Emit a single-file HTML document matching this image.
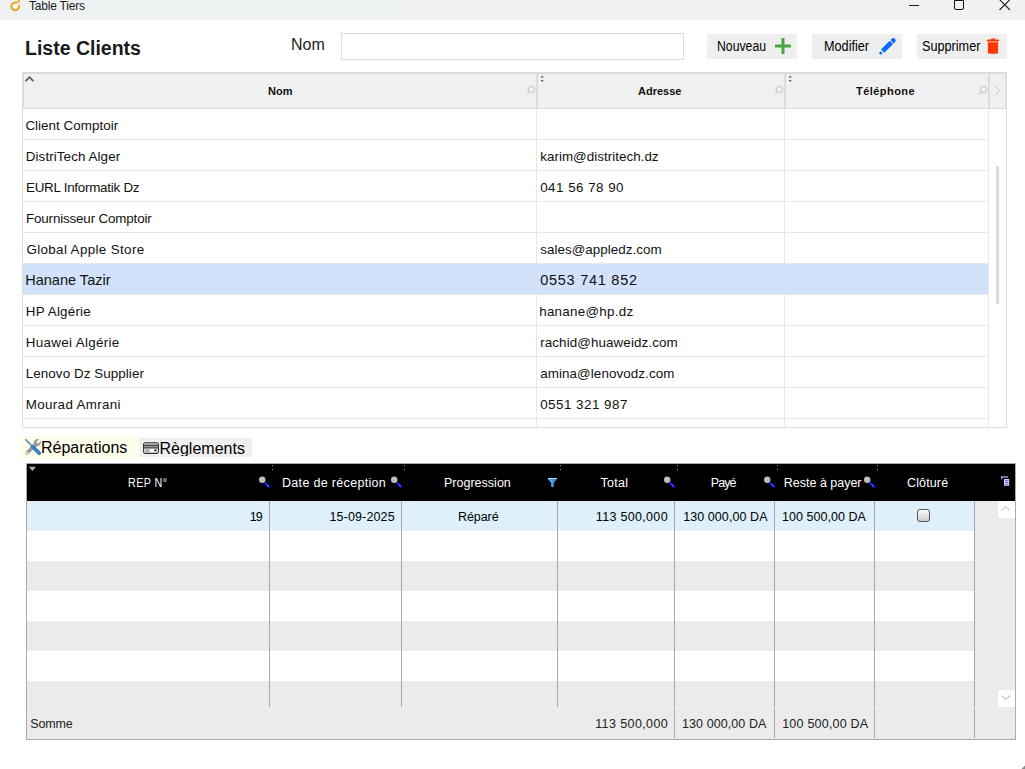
<!DOCTYPE html>
<html><head><meta charset="utf-8">
<style>
*{margin:0;padding:0;box-sizing:border-box}
html,body{width:1025px;height:769px;overflow:hidden;background:#fff;font-family:"Liberation Sans",sans-serif;color:#000;position:relative}
.a{position:absolute;white-space:nowrap}
#title{left:0;top:0;width:1025px;height:20px;background:linear-gradient(90deg,#eef2f3,#eff1f3 60%,#f1f1f4);border-bottom:0}
.btn{background:#efefef;height:25px;top:34px}
.btxt{font-size:14px;top:38px;color:#000;transform-origin:0 0}
.hdr{background:#f0f0f0}
.cell{font-size:13.4px;color:#111}
.hl{font-size:14.5px}
.rl{height:1px;background:#e8e8e8}
.bh{color:#fff;font-size:12.5px;top:476px}
.bt{font-size:12.5px;color:#000}
.vl{width:1px;background:#a9a9a9}
</style></head><body>
<!-- title bar -->
<div id="title" class="a"></div><div class="a" style="left:0;top:20px;width:1025px;height:1px;background:#f7f9f9"></div>
<svg class="a" style="left:5px;top:0px" width="20" height="14" viewBox="0 0 20 14">
  <path d="M12.2 3.0 A3.9 3.9 0 1 0 13.9 5.0" fill="none" stroke="#eaa20f" stroke-width="1.9"/>
  <path d="M7.9 5.4 L9.8 7.4 L13.2 3.7" fill="none" stroke="#fff" stroke-width="1.3"/>
  <path d="M13.6 -0.5 V2.6 M12.3 1.3 H14.9" stroke="#eaa20f" stroke-width="1.3"/>
</svg>
<div class="a" style="left:29px;top:-1px;font-size:12px;color:#1a1a1a;letter-spacing:-0.2px">Table Tiers</div>
<div class="a" style="left:909px;top:5px;width:10px;height:1px;background:#222"></div>
<div class="a" style="left:954px;top:0px;width:10px;height:10px;border:1px solid #111;border-radius:0 0 2px 2px"></div>
<svg class="a" style="left:999px;top:0px" width="12" height="11" viewBox="0 0 12 11"><path d="M0.5 -0.5 L11 10 M11 -0.5 L0.5 10" stroke="#222" stroke-width="1.1"/></svg>

<!-- header -->
<div class="a" style="left:25px;top:37px;font-size:19.5px;font-weight:bold;color:#1a1a1a">Liste Clients</div>
<div class="a" style="left:291px;top:36px;font-size:16px;color:#222">Nom</div>
<div class="a" style="left:341px;top:33px;width:343px;height:27px;border:1px solid #dcdcdc;background:#fff"></div>

<div class="a btn" style="left:707px;width:90px"></div>
<div class="a btxt" style="left:717px;transform:scaleX(0.875)">Nouveau</div>
<svg class="a" style="left:775px;top:38px" width="16" height="16"><rect x="6.5" y="0" width="3" height="16" fill="#4aa541"/><rect x="0" y="6.5" width="16" height="3" fill="#4aa541"/></svg>

<div class="a btn" style="left:812px;width:90px"></div>
<div class="a btxt" style="left:824px;transform:scaleX(0.905)">Modifier</div>
<svg class="a" style="left:874px;top:34px" width="28" height="24" viewBox="0 0 28 24">
  <g transform="translate(5.6 20.2) rotate(-45)" fill="#0a6cff">
    <rect x="0.3" y="-1.3" width="2.6" height="2.6" rx="0.5"/>
    <rect x="4.3" y="-2.4" width="12.4" height="4.8" rx="0.7"/>
    <path d="M17.6 -2.4 H19.4 Q21.7 -2.4 21.7 0 Q21.7 2.4 19.4 2.4 H17.6 Z"/>
  </g>
</svg>

<div class="a btn" style="left:917px;width:90px"></div>
<div class="a btxt" style="left:922px;transform:scaleX(0.905)">Supprimer</div>
<svg class="a" style="left:986px;top:38px" width="14" height="16" viewBox="0 0 14 16">
  <path d="M4.3 1.8 Q4.6 0.2 7 0.2 Q9.4 0.2 9.7 1.8 Z" fill="#ff3300"/>
  <rect x="0.8" y="1.6" width="12.4" height="1.8" rx="0.9" fill="#ff3300"/>
  <path d="M1.9 4.2 H12.1 V14.2 Q12.1 15.8 10.5 15.8 H3.5 Q1.9 15.8 1.9 14.2 Z" fill="#ff3700"/>
</svg>

<!-- top grid -->
<div class="a" style="left:22px;top:72px;width:985px;height:356px;border:1px solid #dadce0;background:#fff"></div>
<div class="a hdr" style="left:23px;top:73px;width:983px;height:36px;border:1px solid #dadce0"></div>
<div class="a" style="left:536px;top:74px;width:2px;height:34px;background:#dadce0"></div>
<div class="a" style="left:784px;top:74px;width:2px;height:34px;background:#dadce0"></div>
<div class="a" style="left:988px;top:74px;width:2px;height:34px;background:#dadce0"></div>
<!-- column lines body -->
<div class="a" style="left:536px;top:109px;width:1px;height:317px;background:#e8e8e8"></div>
<div class="a" style="left:784px;top:109px;width:1px;height:317px;background:#e8e8e8"></div>
<div class="a" style="left:988px;top:109px;width:1px;height:317px;background:#e8e8e8"></div>

<!-- highlighted row -->
<div class="a" style="left:23px;top:264px;width:965px;height:30px;background:#d2e2fb"></div>

<!-- row lines -->
<div class="a rl" style="left:23px;top:139px;width:965px"></div>
<div class="a rl" style="left:23px;top:170px;width:965px"></div>
<div class="a rl" style="left:23px;top:201px;width:965px"></div>
<div class="a rl" style="left:23px;top:232px;width:965px"></div>
<div class="a rl" style="left:23px;top:263px;width:965px"></div>
<div class="a rl" style="left:23px;top:294px;width:965px"></div>
<div class="a rl" style="left:23px;top:325px;width:965px"></div>
<div class="a rl" style="left:23px;top:356px;width:965px"></div>
<div class="a rl" style="left:23px;top:387px;width:965px"></div>
<div class="a rl" style="left:23px;top:418px;width:965px"></div>

<!-- header text -->
<div class="a" style="left:268px;top:85px;font-size:11px;font-weight:bold;color:#111">Nom</div>
<div class="a" style="left:638px;top:85px;font-size:11px;font-weight:bold;color:#111">Adresse</div>
<div class="a" style="left:856px;top:85px;font-size:11px;font-weight:bold;color:#111;letter-spacing:0.45px">Téléphone</div>

<!-- rows text -->
<div id="c0" class="a cell" style="left:25.4px;top:118px;letter-spacing:0.035px">Client Comptoir</div>
<div id="c1" class="a cell" style="left:25.8px;top:149px;letter-spacing:0.087px">DistriTech Alger</div>
<div id="c2" class="a cell" style="left:540.2px;top:149px;letter-spacing:0.034px">karim@distritech.dz</div>
<div id="c3" class="a cell" style="left:26px;top:180px;letter-spacing:-0.253px">EURL Informatik Dz</div>
<div id="c4" class="a cell" style="left:540.2px;top:180px;letter-spacing:0.472px">041 56 78 90</div>
<div id="c5" class="a cell" style="left:26px;top:211px;letter-spacing:-0.158px">Fournisseur Comptoir</div>
<div id="c6" class="a cell" style="left:26.4px;top:242px;letter-spacing:0.359px">Global Apple Store</div>
<div id="c7" class="a cell" style="left:540.2px;top:242px;letter-spacing:0.05px">sales@appledz.com</div>
<div id="c8" class="a cell hl" style="left:25.2px;top:272px;letter-spacing:0.017px">Hanane Tazir</div>
<div id="c9" class="a cell hl" style="left:540.2px;top:272px;letter-spacing:0.737px">0553 741 852</div>
<div id="c10" class="a cell" style="left:25.8px;top:304px;letter-spacing:0.211px">HP Algérie</div>
<div id="c11" class="a cell" style="left:539.2px;top:304px;letter-spacing:0.263px">hanane@hp.dz</div>
<div id="c12" class="a cell" style="left:25.8px;top:335px;letter-spacing:0.323px">Huawei Algérie</div>
<div id="c13" class="a cell" style="left:540.2px;top:335px;letter-spacing:0.1px">rachid@huaweidz.com</div>
<div id="c14" class="a cell" style="left:25.8px;top:366px;letter-spacing:0.071px">Lenovo Dz Supplier</div>
<div id="c15" class="a cell" style="left:540.2px;top:366px;letter-spacing:0.088px">amina@lenovodz.com</div>
<div id="c16" class="a cell" style="left:25.8px;top:397px;letter-spacing:0.325px">Mourad Amrani</div>
<div id="c17" class="a cell" style="left:540.2px;top:397px;letter-spacing:0.482px">0551 321 987</div>

<!-- scrollbar thumb -->
<div class="a" style="left:996px;top:166px;width:3px;height:138px;background:#dbdbdb"></div>

<!-- tabs -->
<div class="a" style="left:20px;top:436px;width:118px;height:23px;background:#fefdea"></div>
<div class="a" style="left:139px;top:438px;width:113px;height:19px;background:#efefef"></div>
<div class="a" style="left:41px;top:439px;font-size:16px;color:#000">Réparations</div>
<div class="a" style="left:159.5px;top:440px;font-size:16px;color:#000;height:16px;overflow:hidden">Règlements</div>

<!-- bottom grid -->
<div class="a" style="left:26px;top:463px;width:990px;height:277px;border:1px solid #aaa;background:#ebebeb"></div>
<div class="a" style="left:27px;top:464px;width:988px;height:37px;background:#000"></div>
<div class="a" style="left:27px;top:501px;width:947px;height:30px;background:#ddf0fb"></div>
<div class="a" style="left:27px;top:531px;width:947px;height:30px;background:#fff"></div>
<div class="a" style="left:27px;top:591px;width:947px;height:30px;background:#fff"></div>
<div class="a" style="left:27px;top:651px;width:947px;height:30px;background:#fff"></div>


<!-- lower grid header text -->
<div id="l0" class="a bh" style="left:127.5px;top:476px;letter-spacing:0.5px;transform:scaleX(0.86);transform-origin:0 0">REP N°</div>
<div id="l1" class="a bh" style="left:282px;top:476px;letter-spacing:0.319px">Date de réception</div>
<div id="l2" class="a bh" style="left:444px;top:476px;letter-spacing:0.01px">Progression</div>
<div id="l3" class="a bh" style="left:600.6px;top:476px;letter-spacing:0.25px">Total</div>
<div id="l4" class="a bh" style="left:710.8px;top:476px;letter-spacing:-0.934px">Payé</div>
<div id="l5" class="a bh" style="left:783.8px;top:476px;letter-spacing:-0.008px">Reste à payer</div>
<div id="l6" class="a bh" style="left:907px;top:476px;letter-spacing:0.133px">Clôturé</div>
<div id="l7" class="a bt" style="left:249.8px;top:510px;letter-spacing:-0.9px">19</div>
<div id="l8" class="a bt" style="left:329.4px;top:510px;letter-spacing:0.144px">15-09-2025</div>
<div id="l9" class="a bt" style="left:458px;top:510px;letter-spacing:-0.08px">Réparé</div>
<div id="l10" class="a bt" style="left:595.8px;top:510px;letter-spacing:0.32px">113 500,000</div>
<div id="l11" class="a bt" style="left:683.2px;top:510px;letter-spacing:0.075px">130 000,00 DA</div>
<div id="l12" class="a bt" style="left:782px;top:510px;letter-spacing:0.042px">100 500,00 DA</div>
<div id="l13" class="a bt" style="left:30.2px;top:717px;letter-spacing:-0.125px;color:#222">Somme</div>
<div id="l14" class="a bt" style="left:595.2px;top:717px;letter-spacing:0.4px;color:#222">113 500,000</div>
<div id="l15" class="a bt" style="left:682px;top:717px;letter-spacing:0.083px;color:#222">130 000,00 DA</div>
<div id="l16" class="a bt" style="left:782.2px;top:717px;letter-spacing:0.217px;color:#222">100 500,00 DA</div>

<!-- column lines -->
<div class="a vl" style="left:269px;top:501px;height:206px"></div>
<div class="a vl" style="left:401px;top:501px;height:206px"></div>
<div class="a vl" style="left:557px;top:501px;height:206px"></div>
<div class="a vl" style="left:674px;top:501px;height:206px"></div>
<div class="a vl" style="left:774px;top:501px;height:206px"></div>
<div class="a vl" style="left:874px;top:501px;height:206px"></div>
<div class="a vl" style="left:974px;top:501px;height:206px"></div>
<div class="a vl" style="left:674px;top:708px;height:30px"></div>
<div class="a vl" style="left:774px;top:708px;height:30px"></div>
<div class="a vl" style="left:874px;top:708px;height:30px"></div>
<div class="a vl" style="left:974px;top:708px;height:30px"></div>

<!-- data row -->
<div class="a" style="left:917px;top:509px;width:13px;height:13px;border:1px solid #555;border-radius:3px;background:linear-gradient(#fcfcfc,#cdcdcd)"></div>

<!-- footer -->

<!-- scroll buttons -->
<div class="a" style="left:998px;top:501px;width:17px;height:17px;background:#fff"></div>
<div class="a" style="left:998px;top:690px;width:17px;height:17px;background:#fff"></div>

<!-- top grid header icons -->
<svg class="a" style="left:22px;top:72px" width="985" height="36" viewBox="0 0 985 36">
  <path d="M3.5 9.1 L7.5 5.1 L11.4 9.1" fill="none" stroke="#555a60" stroke-width="1.7"/>
  <g fill="none" stroke="#c2c2c2" stroke-width="1">
    <circle cx="509.5" cy="17.5" r="3.2"/><path d="M507.2 19.8 L504.5 22.6"/>
    <circle cx="757.5" cy="17.5" r="3.2"/><path d="M755.2 19.8 L752.5 22.6"/>
    <circle cx="961.5" cy="17.5" r="3.2"/><path d="M959.2 19.8 L956.5 22.6"/>
    <path d="M973.2 14.3 L977.6 18.6 L973.2 22.7" stroke="#c4c4c4"/>
  </g>
  <g fill="#555">
    <path d="M518.7 5.5 L521.7 5.5 L520.2 3.5 Z"/><path d="M518.7 8 L521.7 8 L520.2 10 Z"/>
    <path d="M766.7 5.5 L769.7 5.5 L768.2 3.5 Z"/><path d="M766.7 8 L769.7 8 L768.2 10 Z"/>
  </g>
</svg>

<!-- tab icons -->
<svg class="a" style="left:23px;top:437px" width="20" height="20" viewBox="0 0 20 20">
  <path d="M4.2 15.8 L11 9" stroke="#9a9a9a" stroke-width="3.6" stroke-linecap="round"/>
  <path d="M9.2 10.8 L10.6 8.2 Q10 4.8 12 3 Q13.6 1.7 16.2 2.2 L13.3 5.1 L15 6.8 L17.9 3.9 Q18.4 6.4 16.8 8 Q14.6 10 11.6 9.4 Z" fill="#9a9a9a"/>
  <circle cx="4.3" cy="15.7" r="1" fill="#fff"/>
  <path d="M2.8 2.8 L9 9" stroke="#3d7fc1" stroke-width="1.3" stroke-linecap="round"/>
  <path d="M3.4 2.6 L4.4 4.4 L2.6 3.4 Z" fill="#3d7fc1"/>
  <path d="M9.4 9.4 L16.2 16.2" stroke="#3d7fc1" stroke-width="3.8" stroke-linecap="round"/>
</svg>
<svg class="a" style="left:140px;top:439px" width="22" height="18" viewBox="0 0 22 18">
  <rect x="3.6" y="3.8" width="14.8" height="10.6" rx="1.6" fill="#fff" stroke="#2a2a2a" stroke-width="1.1"/>
  <rect x="4.1" y="4.4" width="13.8" height="5" fill="#999"/>
  <rect x="4.1" y="6.2" width="13.8" height="0.9" fill="#3a3a3a"/>
  <rect x="4.1" y="8.4" width="13.8" height="1" fill="#3a3a3a"/>
  <rect x="5.2" y="10.4" width="4.4" height="2.4" fill="#888"/>
  <rect x="5.2" y="11.3" width="4.4" height="0.6" fill="#ddd"/>
  <circle cx="15.5" cy="11.3" r="1.2" fill="#444"/>
</svg>

<!-- lower grid header icons -->
<svg class="a" style="left:26px;top:463px" width="989" height="38" viewBox="0 0 989 38">
  <path d="M2.8 3.8 L10 3.8 L6.4 8 Z" fill="#b0b0b0"/>
  <g fill="#8a8a8a">
    <rect x="246" y="2" width="1" height="1.2"/><rect x="246" y="6" width="1" height="1.2"/>
    <rect x="378" y="2" width="1" height="1.2"/><rect x="378" y="6" width="1" height="1.2"/>
    <rect x="534" y="2" width="1" height="1.2"/><rect x="534" y="6" width="1" height="1.2"/>
    <rect x="651" y="2" width="1" height="1.2"/><rect x="651" y="6" width="1" height="1.2"/>
    <rect x="751" y="2" width="1" height="1.2"/><rect x="751" y="6" width="1" height="1.2"/>
    <rect x="851" y="2" width="1" height="1.2"/><rect x="851" y="6" width="1" height="1.2"/>
  </g>
  <defs>
    <radialGradient id="sp" cx="0.4" cy="0.4" r="0.75"><stop offset="0" stop-color="#c8c8c8"/><stop offset="0.7" stop-color="#b4b4b4"/><stop offset="1" stop-color="#f0f0f0"/></radialGradient>
    <g id="mg">
      <path d="M-5 -4.2 L-0.3 0.3" stroke="#0000f0" stroke-width="2.4"/>
      <path d="M-4.3 -3.5 L-0.8 -0.2" stroke="#fff" stroke-width="0.9" stroke-dasharray="0.9 0.9"/>
      <circle cx="-7.8" cy="-7.3" r="3.2" fill="url(#sp)"/>
    </g>
    <linearGradient id="fg" x1="0" y1="0" x2="1" y2="0"><stop offset="0" stop-color="#5ec4ff"/><stop offset="1" stop-color="#1f6fe0"/></linearGradient>
  </defs>
  <use href="#mg" x="244" y="24"/>
  <use href="#mg" x="376" y="24"/>
  <use href="#mg" x="649" y="24"/>
  <use href="#mg" x="749" y="24"/>
  <use href="#mg" x="849" y="24"/>
  <rect x="522" y="15" width="9" height="1" fill="#c8d8e8"/>
  <path d="M522 16 L531 16 L527.8 20 L527.8 24 L525.2 24 L525.2 20 Z" fill="url(#fg)"/>
  <g>
    <rect x="975" y="13.3" width="7" height="1.4" fill="#9a9af5"/>
    <rect x="975" y="13.3" width="1.3" height="3" fill="#9a9af5"/>
    <rect x="978" y="16" width="5.2" height="6.8" fill="#cfd2ff"/>
    <rect x="978.9" y="17.2" width="3.4" height="0.9" fill="#5a5ad0"/>
    <rect x="978.9" y="19" width="3.4" height="0.9" fill="#5a5ad0"/>
    <rect x="978.9" y="20.8" width="3.4" height="0.9" fill="#5a5ad0"/>
  </g>
</svg>
<!-- scroll arrows -->
<svg class="a" style="left:998px;top:501px" width="17" height="17"><path d="M3.6 9.6 L7.8 5.6 L12 9.6" fill="none" stroke="#d2d2d2" stroke-width="1.4"/></svg>
<svg class="a" style="left:998px;top:690px" width="17" height="17"><path d="M3.3 5.6 L7.8 9.3 L12.3 5.6" fill="none" stroke="#cfcfcf" stroke-width="1.5"/></svg>
<svg class="a" style="left:1021px;top:765px" width="4" height="4"><path d="M4 0.5 L4 4 L0.5 4 Z" fill="#8a8a8a"/></svg>
</body></html>
